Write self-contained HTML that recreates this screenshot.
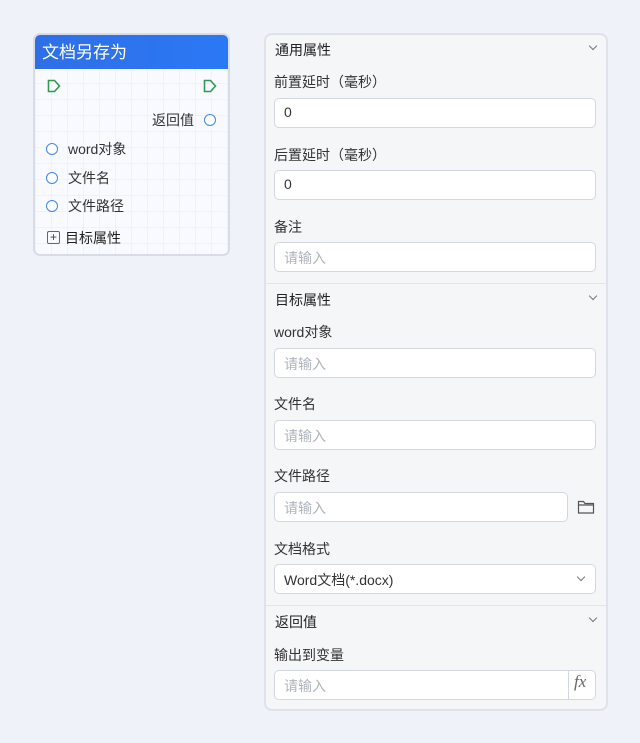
<!DOCTYPE html>
<html><head><meta charset="utf-8"><style>
*{box-sizing:border-box;margin:0;padding:0}
body{width:640px;height:743px;background:#eff2f9;font-family:"Liberation Sans","Noto Sans CJK SC",sans-serif;font-size:14px;color:#333;position:relative;overflow:hidden}
.a{position:absolute}
.node{left:33px;top:33px;width:197px;height:223px;border:2px solid #d8dce6;border-radius:7px;background:#f8faff;background-image:linear-gradient(#f0f2f8 1px,transparent 1px),linear-gradient(90deg,#f0f2f8 1px,transparent 1px);background-size:16px 16px;overflow:hidden}
.hd{left:0;top:0;width:100%;height:34px;background:linear-gradient(90deg,#2f6fe6,#2b78f5);color:#fff;font-size:17px;padding:3px 0 0 7px}
.c{width:12px;height:12px;border:1.5px solid #3d86f5;border-radius:50%;background:#fff}
.t{font-size:14px;color:#333}
.panel{left:264px;top:33px;width:344px;height:678px;border:2px solid #dfe2e8;border-radius:8px;background:#f5f6f8}
.h{font-size:14px;color:#222;left:9px}
.l{font-size:14px;color:#333;left:8px}
.in{left:8px;width:322px;height:30px;border:1px solid #d3d7df;border-radius:5px;background:#fff;padding:5px 9px;color:#333}
.ph{color:#b0b4bc}
.chev{right:10px;width:6px;height:6px;border-right:1.3px solid #777;border-bottom:1.3px solid #777;transform:rotate(45deg)}
.div{left:0;width:100%;height:1px;background:#e3e5ea}
</style></head><body>
<div class="a node">
 <div class="a hd">文档另存为</div>
 <svg class="a" style="left:12px;top:44px" width="14" height="14"><path d="M1.5 1.5h6l5 5.5-5 5.5h-6z" fill="none" stroke="#2e9a52" stroke-width="1.6"/></svg>
 <svg class="a" style="left:168px;top:44px" width="14" height="14"><path d="M1.5 1.5h6l5 5.5-5 5.5h-6z" fill="none" stroke="#2e9a52" stroke-width="1.6"/></svg>
 <div class="a t" style="left:117px;top:75px">返回值</div><div class="a c" style="left:169px;top:79px"></div>
 <div class="a c" style="left:11px;top:108px"></div><div class="a t" style="left:33px;top:104px">word对象</div>
 <div class="a c" style="left:11px;top:137px"></div><div class="a t" style="left:33px;top:133px">文件名</div>
 <div class="a c" style="left:11px;top:165px"></div><div class="a t" style="left:33px;top:161px">文件路径</div>
 <div class="a" style="left:12px;top:196px;width:13px;height:13px;border:1.3px solid #666;border-radius:2px;font-size:12px;line-height:10px;text-align:center;color:#444">+</div>
 <div class="a t" style="left:30px;top:193px;color:#222">目标属性</div>
</div>
<div class="a panel">
 <div class="a h" style="top:5px">通用属性</div><div class="a chev" style="top:8px"></div>
 <div class="a l" style="top:37px">前置延时（毫秒）</div>
 <div class="a in" style="top:63px">0</div>
 <div class="a l" style="top:110px">后置延时（毫秒）</div>
 <div class="a in" style="top:135px">0</div>
 <div class="a l" style="top:182px">备注</div>
 <div class="a in ph" style="top:207px">请输入</div>
 <div class="a div" style="top:248px"></div>
 <div class="a h" style="top:255px">目标属性</div><div class="a chev" style="top:258px"></div>
 <div class="a l" style="top:287px">word对象</div>
 <div class="a in ph" style="top:313px">请输入</div>
 <div class="a l" style="top:359px">文件名</div>
 <div class="a in ph" style="top:385px">请输入</div>
 <div class="a l" style="top:431px">文件路径</div>
 <div class="a in ph" style="top:457px;width:294px">请输入</div>
 <svg class="a" style="left:311px;top:464px" width="18" height="16"><path d="M1.5 2.5h5l1.5 2h8.5v9.5h-15z M1.5 6h15" fill="none" stroke="#555" stroke-width="1.2"/></svg>
 <div class="a l" style="top:504px">文档格式</div>
 <div class="a in" style="top:529px">Word文档(*.docx)</div><div class="a chev" style="top:539px;right:22px"></div>
 <div class="a div" style="top:570px"></div>
 <div class="a h" style="top:577px">返回值</div><div class="a chev" style="top:580px"></div>
 <div class="a l" style="top:610px">输出到变量</div>
 <div class="a in ph" style="top:635px">请输入</div>
 <div class="a" style="left:302px;top:636px;width:1px;height:28px;background:#d3d7df"></div>
 <div class="a" style="left:308px;top:637px;font-family:'Liberation Serif',serif;font-style:italic;font-size:17px;color:#666">fx</div>
</div>
</body></html>
